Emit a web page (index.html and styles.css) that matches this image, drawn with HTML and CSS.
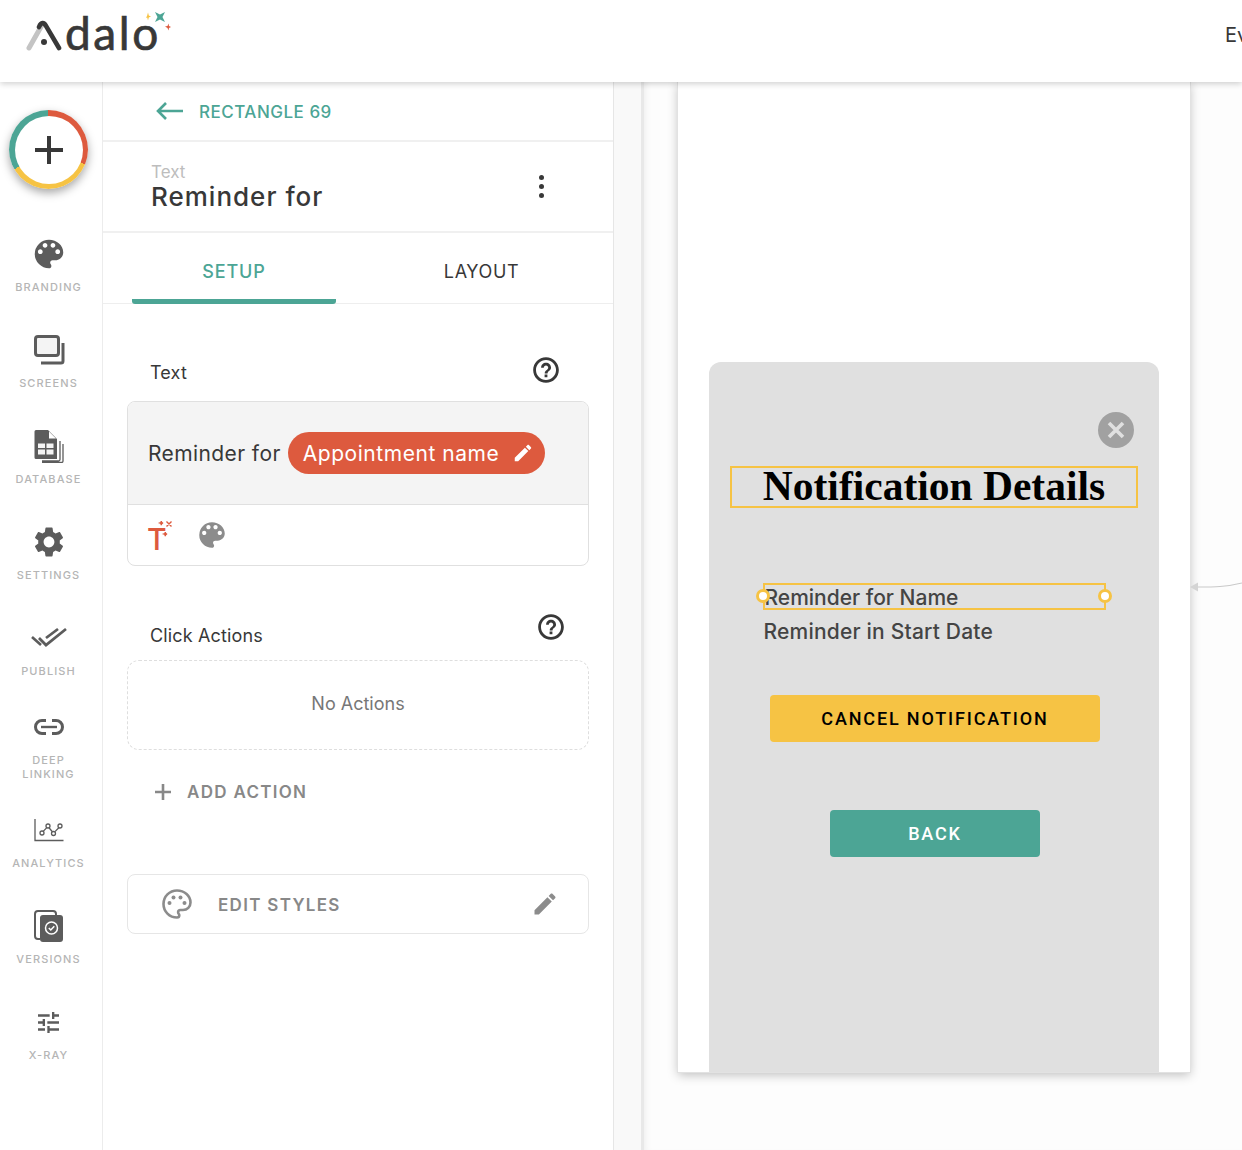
FILE: index.html
```html
<!DOCTYPE html>
<html lang="en">
<head>
    <meta charset="UTF-8">
    <title>Adalo</title>
    <link rel="stylesheet" href="styles.css">
</head>
<body>
    <svg class="sprite" aria-hidden="true">
        <symbol id="i-palette" viewBox="0 0 24 24"><path d="M12 3a9 9 0 0 0 0 18c.83 0 1.5-.67 1.5-1.5 0-.39-.15-.74-.39-1.01-.23-.26-.38-.61-.38-.99 0-.83.67-1.5 1.5-1.5H16c2.76 0 5-2.24 5-5 0-4.42-4.03-8-9-8zm-5.5 9c-.83 0-1.5-.67-1.5-1.5S5.67 9 6.5 9 8 9.67 8 10.5 7.33 12 6.5 12zm3-4C8.67 8 8 7.33 8 6.5S8.67 5 9.5 5s1.5.67 1.5 1.5S10.33 8 9.5 8zm5 0c-.83 0-1.5-.67-1.5-1.5S13.67 5 14.5 5s1.5.67 1.5 1.5S15.33 8 14.5 8zm3 4c-.83 0-1.5-.67-1.5-1.5S16.67 9 17.5 9s1.5.67 1.5 1.5-.67 1.5-1.5 1.5z"/></symbol>
        <symbol id="i-pencil" viewBox="0 0 24 24"><path d="M3 17.25V21h3.75L17.81 9.94l-3.75-3.75L3 17.25zM20.71 7.04c.39-.39.39-1.02 0-1.41l-2.34-2.34c-.39-.39-1.02-.39-1.41 0l-1.83 1.83 3.75 3.75 1.83-1.83z"/></symbol>
        <symbol id="i-help" viewBox="0 0 24 24"><path d="M12 1C5.93 1 1 5.93 1 12s4.93 11 11 11 11-4.93 11-11S18.07 1 12 1zm0 19.6c-4.74 0-8.6-3.86-8.6-8.6S7.26 3.4 12 3.4s8.6 3.86 8.6 8.6-3.86 8.6-8.6 8.6z"/><path d="M10.8 18.2h2.4v-2.4h-2.4v2.4zM12 5.8c-2.4 0-4.2 1.8-4.2 4.2h2.3c0-1.1.8-1.9 1.9-1.9s1.9.8 1.9 1.9c0 2-3 1.8-3 5h2.4c0-2.2 3-2.6 3-5 0-2.4-1.9-4.2-4.3-4.2z"/></symbol>
    </svg>

    <header class="topbar">
        <div class="logo">
            <svg class="logo-a" viewBox="0 0 36 32" width="36" height="32">
                <path d="M3 29 L16 6" stroke="#c4c4c4" stroke-width="5" stroke-linecap="round" fill="none"/>
                <path d="M13 8 C15 3 18 3 20 7 L33 29" stroke="#383838" stroke-width="4.6" stroke-linecap="round" fill="none"/>
                <circle cx="18" cy="23" r="3" fill="#383838"/>
            </svg>
            <span class="logo-text">dalo</span>
            <svg class="logo-stars" viewBox="0 0 28 24" width="28" height="24">
                <path d="M3 7 L4.2 4.6 L5 1.500 L5.800 4.600 L8 5.500 L5.800 6.400 L5 9.500 L4.200 6.400 Z" fill="#f6c344"/>
                <path d="M12 1 L17 3.500 L22 1 L19.500 6 L22 11 L17 8.500 L12 11 L14.500 6 Z" fill="#4ca595"/>
                <path d="M22 15.500 L24.500 15 L25.500 12.500 L26 15 L28 16 L26 17 L25.500 19.500 L24.500 17 Z" fill="#dd5a3e"/>
            </svg>
        </div>
        <span class="topbar-link">Ev</span>
    </header>

    <div class="main">
        <nav class="sidebar">
            <div class="fab-wrap">
                <div class="fab">
                    <div class="fab-inner">
                        <svg viewBox="0 0 30 30" width="30" height="30"><path d="M15 1v28M1 15h28" stroke="#383838" stroke-width="4" fill="none"/></svg>
                    </div>
                </div>
            </div>

            <a class="nav-item">
                <span class="nav-icon"><svg width="38" height="38"><use href="#i-palette"/></svg></span>
                <span>BRANDING</span>
            </a>
            <a class="nav-item">
                <span class="nav-icon"><svg viewBox="0 0 32 32" width="32" height="32">
                    <rect x="2.500" y="2.500" width="23" height="19" rx="2.500" fill="#f4f4f4" stroke="#5c5c5c" stroke-width="3"/>
                    <path d="M30 9v18a2 2 0 0 1-2 2H8" fill="none" stroke="#5c5c5c" stroke-width="3"/>
                </svg></span>
                <span>SCREENS</span>
            </a>
            <a class="nav-item">
                <span class="nav-icon"><svg viewBox="0 0 32 34" width="32" height="34">
                    <path d="M3 1h12l9 9v20H3a1.500 1.500 0 0 1-1.500-1.500V2.500A1.500 1.500 0 0 1 3 1z" fill="#5c5c5c"/>
                    <path d="M16 2.500l7 7h-7z" fill="#fff"/>
                    <path d="M5 14.500h7v4.500H5zM13.500 14.500h7v4.500h-7zM5 20.500h7v5H5zM13.500 20.500h7v5h-7z" fill="#f4f4f4"/>
                    <path d="M27 12v18.500a1.500 1.500 0 0 1-1.500 1.500H9M30 15v17a1.500 1.500 0 0 1-1.500 1.500H9" fill="none" stroke="#5c5c5c" stroke-width="1.300"/>
                </svg></span>
                <span>DATABASE</span>
            </a>
            <a class="nav-item">
                <span class="nav-icon"><svg viewBox="0 0 24 24" width="36" height="36"><path d="M19.14 12.940c.040-.3.060-.61.060-.94 0-.32-.020-.64-.070-.94l2.030-1.580c.18-.14.23-.41.12-.61l-1.920-3.320c-.12-.22-.37-.29-.59-.22l-2.390.96c-.5-.38-1.030-.7-1.620-.94l-.36-2.540c-.040-.24-.24-.41-.48-.41h-3.840c-.24 0-.43.17-.47.41l-.36 2.540c-.59.24-1.130.57-1.620.94l-2.390-.96c-.22-.080-.47 0-.59.22L2.740 8.870c-.12.21-.080.47.12.61l2.030 1.580c-.050.3-.090.63-.090.94s.020.64.070.94l-2.030 1.580c-.18.14-.23.41-.12.61l1.920 3.320c.12.22.37.29.59.22l2.390-.96c.5.38 1.030.7 1.620.94l.36 2.540c.050.24.24.41.48.41h3.840c.24 0 .44-.17.47-.41l.36-2.540c.59-.24 1.130-.56 1.620-.94l2.390.96c.22.080.47 0 .59-.22l1.920-3.320c.12-.22.070-.47-.12-.61l-2.010-1.580zM12 15.600c-1.980 0-3.600-1.620-3.600-3.600s1.620-3.600 3.600-3.600 3.600 1.620 3.600 3.600-1.620 3.600-3.600 3.600z"/></svg></span>
                <span>SETTINGS</span>
            </a>
            <a class="nav-item">
                <span class="nav-icon"><svg viewBox="0 0 36 24" width="36" height="24">
                    <path d="M1 11l9 8" stroke="#5c5c5c" stroke-width="2.600" fill="none"/>
                    <path d="M8 12l7 7L35 3" stroke="#5c5c5c" stroke-width="2.800" fill="none"/>
                    <path d="M15 12L27 3" stroke="#5c5c5c" stroke-width="2.800" fill="none"/>
                </svg></span>
                <span>PUBLISH</span>
            </a>
            <a class="nav-item nav-item-double">
                <span class="nav-icon"><svg viewBox="0 0 32 18" width="32" height="18">
                    <path d="M13 2.500H9a6.500 6.500 0 0 0 0 13h4M19 2.500h4a6.500 6.500 0 0 1 0 13h-4" fill="none" stroke="#5c5c5c" stroke-width="3"/>
                    <path d="M8 9h16" stroke="#5c5c5c" stroke-width="2.400"/>
                </svg></span>
                <span>DEEP<br>LINKING</span>
            </a>
            <a class="nav-item">
                <span class="nav-icon"><svg viewBox="0 0 30 24" width="30" height="24">
                    <g fill="none" stroke="#5c5c5c" stroke-width="1.300">
                        <path d="M1 1v21.500h28.500"/>
                        <path d="M9.200 13.400l3.600-3.800M15 9.800l3.400 3.900M21 13.600l3.800-3.800"/>
                        <circle cx="8" cy="15" r="2"/><circle cx="14" cy="8" r="2"/><circle cx="19.500" cy="15.500" r="2"/><circle cx="26" cy="8" r="2"/>
                    </g>
                </svg></span>
                <span>ANALYTICS</span>
            </a>
            <a class="nav-item">
                <span class="nav-icon"><svg viewBox="0 0 30 34" width="30" height="34">
                    <path d="M6 30H4a3 3 0 0 1-3-3V5a3 3 0 0 1 3-3h15a3 3 0 0 1 3 3v1" fill="none" stroke="#5c5c5c" stroke-width="2"/>
                    <rect x="6" y="6" width="23" height="27" rx="3" fill="#5c5c5c"/>
                    <circle cx="17.500" cy="19" r="6" fill="none" stroke="#fff" stroke-width="1.500"/>
                    <path d="M14.800 19l2 2 3.500-3.800" fill="none" stroke="#fff" stroke-width="1.500"/>
                </svg></span>
                <span>VERSIONS</span>
            </a>
            <a class="nav-item">
                <span class="nav-icon"><svg viewBox="3 3 18 18" width="21" height="21"><path d="M3 17v2h6v-2H3zM3 5v2h10V5H3zm10 16v-2h8v-2h-8v-2h-2v6h2zM7 9v2H3v2h4v2h2V9H7zm14 4v-2H11v2h10zm-6-4h2V7h4V5h-4V3h-2v6z"/></svg></span>
                <span>X-RAY</span>
            </a>
        </nav>

        <section class="panel">
            <div class="back-row">
                <svg viewBox="0 0 28 20" width="28" height="20" fill="none" stroke="#4ca595" stroke-width="2.600"><path d="M28 10H3M11 2l-8 8 8 8"/></svg>
                <span>RECTANGLE 69</span>
            </div>

            <div class="title-row">
                <div>
                    <div class="title-type">Text</div>
                    <div class="title-name">Reminder for</div>
                </div>
                <div class="kebab"><i></i><i></i><i></i></div>
            </div>

            <div class="tabs">
                <div class="tab active">SETUP</div>
                <div class="tab">LAYOUT</div>
            </div>

            <div class="panel-body">
                <div class="field-label field-label-text">
                    <span>Text</span>
                    <svg class="help" width="28" height="28"><use href="#i-help"/></svg>
                </div>
                <div class="text-card">
                    <div class="text-card-top">
                        <span>Reminder for</span>
                        <span class="pill">
                            Appointment name
                            <svg width="22" height="22" fill="#fff"><use href="#i-pencil"/></svg>
                        </span>
                    </div>
                    <div class="text-card-bottom">
                        <svg viewBox="0 0 28 44" width="28" height="44">
                            <text x="0" y="37" class="magic-t">T</text>
                            <path transform="translate(0 7)" d="M13 3l1-.3.300-1.700.300 1.700 1.400.3-1.400.4-.300 1.700-.300-1.700zM19.500 1.500l5 5M24.500 1.500l-5 5M17 14l1-.3.300-1.700.300 1.700 1.400.3-1.400.4-.300 1.700-.300-1.700z" fill="#dd5a3e" stroke="#dd5a3e" stroke-width="1.400"/>
                        </svg>
                        <svg width="34" height="34" fill="#8c8c8c"><use href="#i-palette"/></svg>
                    </div>
                </div>

                <div class="field-label field-label-click">
                    <span>Click Actions</span>
                    <svg class="help" width="28" height="28"><use href="#i-help"/></svg>
                </div>
                <div class="no-actions">No Actions</div>

                <div class="add-action">
                    <svg viewBox="0 0 16 16" width="16" height="16"><path d="M8 0v16M0 8h16" stroke="#888" stroke-width="2.600"/></svg>
                    <span>ADD ACTION</span>
                </div>

                <div class="edit-styles">
                    <svg viewBox="0 0 32 32" width="32" height="32" fill="#8c8c8c">
                        <path d="M16 2.500C8.500 2.500 2.500 8.500 2.500 16S8.500 29.500 16 29.500c1.400 0 2.300-1 2.300-2.200 0-.6-.2-1.100-.6-1.500-.4-.4-.6-1-.6-1.500 0-1.300 1-2.300 2.300-2.300H22c4.200 0 7.500-3.300 7.500-7.500C29.500 7.800 23.500 2.500 16 2.500z" fill="none" stroke="#8c8c8c" stroke-width="2.600"/>
                        <circle cx="8.500" cy="15" r="2"/><circle cx="12.500" cy="9.500" r="2"/><circle cx="19.500" cy="9.500" r="2"/><circle cx="23.500" cy="15" r="2"/>
                    </svg>
                    <span>EDIT STYLES</span>
                    <svg class="edit-pencil" width="28" height="28" fill="#8c8c8c"><use href="#i-pencil"/></svg>
                </div>
            </div>
        </section>

        <div class="strip"></div>

        <section class="canvas">
            <div class="phone">
                <div class="modal">
                    <div class="close-row">
                        <div class="close-btn">
                            <svg viewBox="0 0 18 18" width="18" height="18"><path d="M2 2l14 14M16 2L2 16" stroke="#e0e0e0" stroke-width="3.600"/></svg>
                        </div>
                    </div>
                    <div class="modal-title">Notification Details</div>
                    <div class="modal-text-box">
                        <span class="handle handle-left"></span>
                        Reminder for Name
                        <span class="handle handle-right"></span>
                    </div>
                    <div class="modal-text">Reminder in Start Date</div>
                    <div class="btn btn-cancel">CANCEL NOTIFICATION</div>
                    <div class="btn btn-back">BACK</div>
                </div>
            </div>
            <svg class="link-arrow" viewBox="0 0 52 12" width="52" height="12">
                <path d="M8 6 C24 6 36 6 52 2" fill="none" stroke="#c9c9c9" stroke-width="1.200"/>
                <path d="M0 6l8-4.500v9z" fill="#d4d4d4"/>
            </svg>
        </section>
    </div>
</body>
</html>
```

FILE: styles.css
```css
:root {
    --teal: #4ca595;
    --red: #dd5a3e;
    --yellow: #f6c344;
    --dark: #383838;
    --border: #e8e8e8;
    --icon: #5c5c5c;
}

* {
    box-sizing: border-box;
}

html, body {
    height: 100%;
}

body {
    margin: 0;
    height: 1150px;
    overflow: hidden;
    display: flex;
    flex-direction: column;
    font-family: Inter, "Open Sans", sans-serif;
    color: var(--dark);
    background: #fff;
}

.sprite {
    display: block;
    width: 0;
    height: 0;
}

/* top bar */
.topbar {
    height: 82px;
    flex: none;
    display: flex;
    align-items: center;
    justify-content: space-between;
    padding: 0 0 12px 25px;
    overflow: hidden;
    background: #fff;
    box-shadow: 0 2px 6px rgba(0, 0, 0, 0.18);
    position: relative;
    z-index: 5;
}

.logo {
    display: flex;
    align-items: flex-start;
    height: 44px;
}

.logo-a {
    margin-top: 6px;
    margin-left: 1px;
}

.logo-text {
    font-family: Lato, sans-serif;
    font-size: 46px;
    font-weight: 400;
    line-height: 40px;
    letter-spacing: 2.6px;
    color: var(--dark);
    margin-left: 3px;
    -webkit-text-stroke: 0.7px var(--dark);
}

.logo-stars {
    margin: -2px 0 0 -18px;
}

.topbar-link {
    font-size: 20px;
    width: 17px;
    color: var(--dark);
}

.main {
    flex: 1;
    display: flex;
    min-height: 0;
}

/* left nav */
.sidebar {
    width: 103px;
    flex: none;
    border-right: 1px solid #ececec;
    display: flex;
    flex-direction: column;
    background: #fff;
}

.fab-wrap {
    height: 141px;
    padding: 28px 0 0 9px;
}

.fab {
    width: 79px;
    height: 79px;
    border-radius: 50%;
    padding: 5.5px;
    background: conic-gradient(var(--red) 0 112deg, var(--yellow) 112deg 240deg, var(--teal) 240deg 360deg);
    box-shadow: 0 4px 10px rgba(0, 0, 0, 0.35);
}

.fab-inner {
    width: 100%;
    height: 100%;
    border-radius: 50%;
    background: #fff;
    display: flex;
    align-items: center;
    justify-content: center;
}

.nav-item {
    height: 96px;
    display: flex;
    flex-direction: column;
    align-items: center;
    gap: 8px;
    padding: 13px 5px 0 0;
    font-size: 11px;
    font-weight: 500;
    line-height: 14px;
    letter-spacing: 1.1px;
    text-align: center;
    color: #b5b5b5;
}

.nav-item-double {
    padding-top: 6px;
}

.nav-icon {
    height: 36px;
    display: flex;
    align-items: center;
    justify-content: center;
    fill: var(--icon);
}

/* inspector panel */
.panel {
    width: 511px;
    flex: none;
    border-right: 1px solid #e6e6e6;
    background: #fff;
}

.back-row {
    height: 60px;
    display: flex;
    align-items: center;
    gap: 16px;
    padding-left: 52px;
    border-bottom: 2px solid #f0f0f0;
    font-size: 17px;
    font-weight: 500;
    letter-spacing: 0.5px;
    color: var(--teal);
}

.back-row span {
    padding-top: 2px;
}

.title-row {
    height: 91px;
    display: flex;
    align-items: center;
    justify-content: space-between;
    padding: 2px 69px 0 48px;
    border-bottom: 2px solid #f0f0f0;
}

.title-type {
    font-size: 17px;
    line-height: 19px;
    color: #bdbdbd;
}

.title-name {
    font-size: 26px;
    line-height: 30px;
    font-weight: 500;
    letter-spacing: 1px;
}

.kebab {
    display: flex;
    flex-direction: column;
    gap: 4px;
    padding-bottom: 2px;
}

.kebab i {
    display: block;
    width: 5px;
    height: 5px;
    border-radius: 50%;
    background: var(--dark);
}

.tabs {
    height: 71px;
    display: flex;
    padding: 0 0 0 29px;
    border-bottom: 1px solid #eee;
}

.tab {
    flex: none;
    width: 204px;
    height: 71px;
    padding-top: 28px;
    text-align: center;
    font-size: 18px;
    line-height: 22px;
    letter-spacing: 0.6px;
}

.tab + .tab {
    width: 277px;
    padding-left: 14px;
}

.tab.active {
    color: var(--teal);
    font-weight: 500;
    letter-spacing: 0.9px;
    border-bottom: 5px solid var(--teal);
    border-radius: 0 0 3px 3px;
}

.panel-body {
    padding: 0 24px;
}

.field-label {
    display: flex;
    align-items: center;
    justify-content: space-between;
    padding-left: 23px;
    font-size: 18px;
    letter-spacing: 0.15px;
}

.field-label-text {
    height: 97px;
    padding: 35px 29px 0 23px;
}

.field-label-click {
    height: 94px;
    padding: 28px 24px 0 23px;
    align-items: flex-start;
}

.field-label-text span {
    padding-top: 4px;
}

.field-label-click span {
    padding-top: 31px;
}

.field-label-click .help {
    margin-top: 19px;
}

.help {
    fill: var(--dark);
}

.text-card {
    border: 1px solid #e0e0e0;
    border-radius: 8px;
    overflow: hidden;
}

.text-card-top {
    height: 103px;
    display: flex;
    align-items: center;
    gap: 7px;
    padding: 0 20px;
    background: #f4f4f4;
    border-bottom: 1px solid #e0e0e0;
    font-size: 21px;
    letter-spacing: 0.4px;
}

.pill {
    height: 42px;
    display: flex;
    align-items: center;
    gap: 13px;
    padding: 0 11px 0 15px;
    border-radius: 21px;
    background: var(--red);
    color: #fff;
    letter-spacing: 0.55px;
}

.text-card-bottom {
    height: 60px;
    display: flex;
    align-items: center;
    gap: 20px;
    padding: 0 0 0 19px;
}

.magic-t {
    font-family: Inter, sans-serif;
    font-size: 30px;
    font-weight: 500;
    fill: var(--red);
}

.no-actions {
    height: 90px;
    display: flex;
    align-items: center;
    justify-content: center;
    border: 1px dashed #dedede;
    border-radius: 12px;
    font-size: 18px;
    color: #777;
    padding-bottom: 3px;
}

.add-action {
    display: flex;
    align-items: center;
    gap: 16px;
    height: 84px;
    padding-left: 28px;
    font-size: 17px;
    font-weight: 600;
    letter-spacing: 1.3px;
    color: #888;
}

.edit-styles {
    height: 60px;
    margin-top: 40px;
    display: flex;
    align-items: center;
    padding: 0 29px 0 33px;
    border: 1px solid #e6e6e6;
    border-radius: 8px;
    font-size: 17px;
    font-weight: 600;
    letter-spacing: 1.3px;
    color: #888;
}

.edit-styles span {
    margin-left: 25px;
    padding-top: 2px;
    flex: 1;
}

/* gutter between panel and canvas */
.strip {
    width: 30px;
    flex: none;
    background: #f9f9f9;
    border-right: 3px solid #e8e8e8;
}

.canvas {
    flex: 1;
    position: relative;
    background: #fdfdfd;
    padding-left: 34px;
    box-shadow: inset 6px 0 6px -4px rgba(0, 0, 0, 0.06);
}

.phone {
    width: 512px;
    height: 990px;
    padding: 280px 31px 0;
    background: #fff;
    box-shadow: 0 0 0 1px #e2e2e2, 0 3px 10px rgba(0, 0, 0, 0.25);
}

.modal {
    height: 710px;
    padding: 0 21px;
    background: #e0e0e0;
    border-radius: 12px 12px 0 0;
    display: flex;
    flex-direction: column;
    align-items: center;
}

.close-row {
    width: 100%;
    height: 104px;
    display: flex;
    justify-content: flex-end;
    padding: 50px 4px 0 0;
}

.close-btn {
    width: 36px;
    height: 36px;
    border-radius: 50%;
    background: #a1a1a1;
    display: flex;
    align-items: center;
    justify-content: center;
}

.modal-title {
    width: 408px;
    height: 42px;
    border: 2px solid var(--yellow);
    font-family: "Liberation Serif", serif;
    font-size: 41.5px;
    font-weight: 700;
    line-height: 36px;
    text-align: center;
    color: #000;
    white-space: nowrap;
}

.modal-text-box {
    position: relative;
    width: 343px;
    height: 27px;
    margin-top: 75px;
    border: 2px solid var(--yellow);
    font-size: 21px;
    font-weight: 500;
    line-height: 25px;
    color: #444;
}

.handle {
    position: absolute;
    top: 4px;
    width: 14px;
    height: 14px;
    border: 3px solid var(--yellow);
    border-radius: 50%;
    background: #fff;
}

.handle-left {
    left: -9px;
}

.handle-right {
    right: -8px;
}

.modal-text {
    width: 343px;
    height: 26px;
    margin-top: 9px;
    padding-left: 1px;
    font-size: 21px;
    font-weight: 500;
    line-height: 26px;
    letter-spacing: 0.2px;
    color: #444;
}

.btn {
    height: 47px;
    display: flex;
    align-items: center;
    justify-content: center;
    border-radius: 4px;
    margin-left: 2px;
    font-family: Roboto, sans-serif;
    font-size: 18px;
    font-weight: 500;
    letter-spacing: 1.85px;
}

.btn-cancel {
    width: 330px;
    margin-top: 50px;
    background: var(--yellow);
    color: #000;
}

.btn-back {
    width: 210px;
    margin-top: 68px;
    background: var(--teal);
    color: #fff;
}

.link-arrow {
    position: absolute;
    left: 546px;
    top: 499px;
}
```
